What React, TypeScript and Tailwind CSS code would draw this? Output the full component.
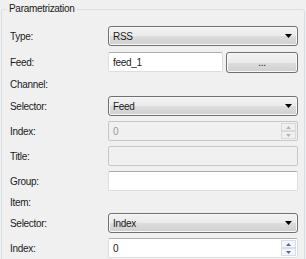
import React from 'react';

const font = { fontFamily: '"Liberation Sans", Arial, sans-serif' };

const Combo: React.FC<{ value: string }> = ({ value }) => (
  <div className="flex items-center h-[20px] w-[190px] border border-[#707070] rounded-[3px] bg-[linear-gradient(to_bottom,#f2f2f2_0%,#ebebeb_50%,#dddddd_50%,#cfcfcf_100%)] shadow-[inset_0_0_0_1px_#f8f8f8] pl-[4px] pr-[4px]">
    <span className="flex-1 text-[#1a1a1a]">{value}</span>
    <svg width="7" height="4" viewBox="0 0 7 4" className="mr-[1px]">
      <polygon points="0,0 7,0 3.5,4" fill="#000" />
    </svg>
  </div>
);

const TextBox: React.FC<{ value?: string; disabled?: boolean; width?: string }> = ({ value = '', disabled, width = 'w-[190px]' }) => (
  <div
    className={`flex items-center h-[20px] ${width} border rounded-[2px] pl-[4px] ${
      disabled ? 'bg-[#f0f0f0] border-[#c7c7c7]' : 'bg-white border-[#d9dee4] border-t-[#abadb3]'
    }`}
  >
    <span className={disabled ? 'text-[#9a9a9a]' : 'text-[#1a1a1a]'}>{value}</span>
  </div>
);

const SpinArrow: React.FC<{ up?: boolean; disabled?: boolean }> = ({ up, disabled }) => (
  <div className={`flex-1 flex items-center justify-center border ${disabled ? 'border-[#dadada] bg-[#f0f0f0]' : 'border-[#d8dde5] bg-[#f4f6f9]'}`}>
    <svg width="5" height="3" viewBox="0 0 5 3">
      <polygon points={up ? '0,3 5,3 2.5,0' : '0,0 5,0 2.5,3'} fill={disabled ? '#b4b4b4' : '#4e66a3'} />
    </svg>
  </div>
);

const Spinner: React.FC<{ value: string; disabled?: boolean }> = ({ value, disabled }) => (
  <div
    className={`flex items-center h-[20px] w-[190px] border rounded-[2px] pl-[4px] pr-[1px] ${
      disabled ? 'bg-[#f0f0f0] border-[#c7c7c7]' : 'bg-white border-[#d9dee4] border-t-[#abadb3]'
    }`}
  >
    <span className={`flex-1 ${disabled ? 'text-[#9a9a9a]' : 'text-[#1a1a1a]'}`}>{value}</span>
    <div className="flex flex-col w-[15px] h-[16px]">
      <SpinArrow up disabled={disabled} />
      <SpinArrow disabled={disabled} />
    </div>
  </div>
);

const Row: React.FC<{ label: string; className?: string; children?: React.ReactNode }> = ({ label, className = '', children }) => (
  <div className={`flex items-center ${className}`}>
    <div className="w-[98px] text-[#1a1a1a]">{label}</div>
    {children}
  </div>
);

export default function App() {
  return (
    <div className="w-[306px] h-[259px] bg-[#f0f0f0] overflow-hidden pt-[9px] pl-[1px] text-[10px] tracking-[-0.3px]" style={font}>
      <div className="relative w-[304px] h-[260px] border border-[#d5dfe5] rounded-[3px] pl-[8px] pt-[16px]">
        <div className="absolute left-[5px] top-[-7px] px-[2px] bg-[#f0f0f0] text-[#1a1a1a] leading-[12px]">Parametrization</div>

        <Row label="Type:" className="h-[20px]">
          <Combo value="RSS" />
        </Row>
        <Row label="Feed:" className="h-[20px] mt-[6px]">
          <TextBox value="feed_1" width="w-[115px]" />
          <div className="ml-[3px] h-[21px] w-[72px] flex items-center justify-center border border-[#707070] rounded-[3px] bg-[linear-gradient(to_bottom,#f2f2f2_0%,#ebebeb_50%,#dddddd_50%,#cfcfcf_100%)] shadow-[inset_0_0_0_1px_#f8f8f8] text-[#1a1a1a]">
            ...
          </div>
        </Row>
        <Row label="Channel:" className="h-[24px]" />
        <Row label="Selector:" className="h-[20px]">
          <Combo value="Feed" />
        </Row>
        <Row label="Index:" className="h-[20px] mt-[5px]">
          <Spinner value="0" disabled />
        </Row>
        <Row label="Title:" className="h-[20px] mt-[5px]">
          <TextBox disabled />
        </Row>
        <Row label="Group:" className="h-[20px] mt-[5px]">
          <TextBox />
        </Row>
        <Row label="Item:" className="h-[22px]" />
        <Row label="Selector:" className="h-[20px]">
          <Combo value="Index" />
        </Row>
        <Row label="Index:" className="h-[20px] mt-[5px]">
          <Spinner value="0" />
        </Row>
      </div>
    </div>
  );
}
